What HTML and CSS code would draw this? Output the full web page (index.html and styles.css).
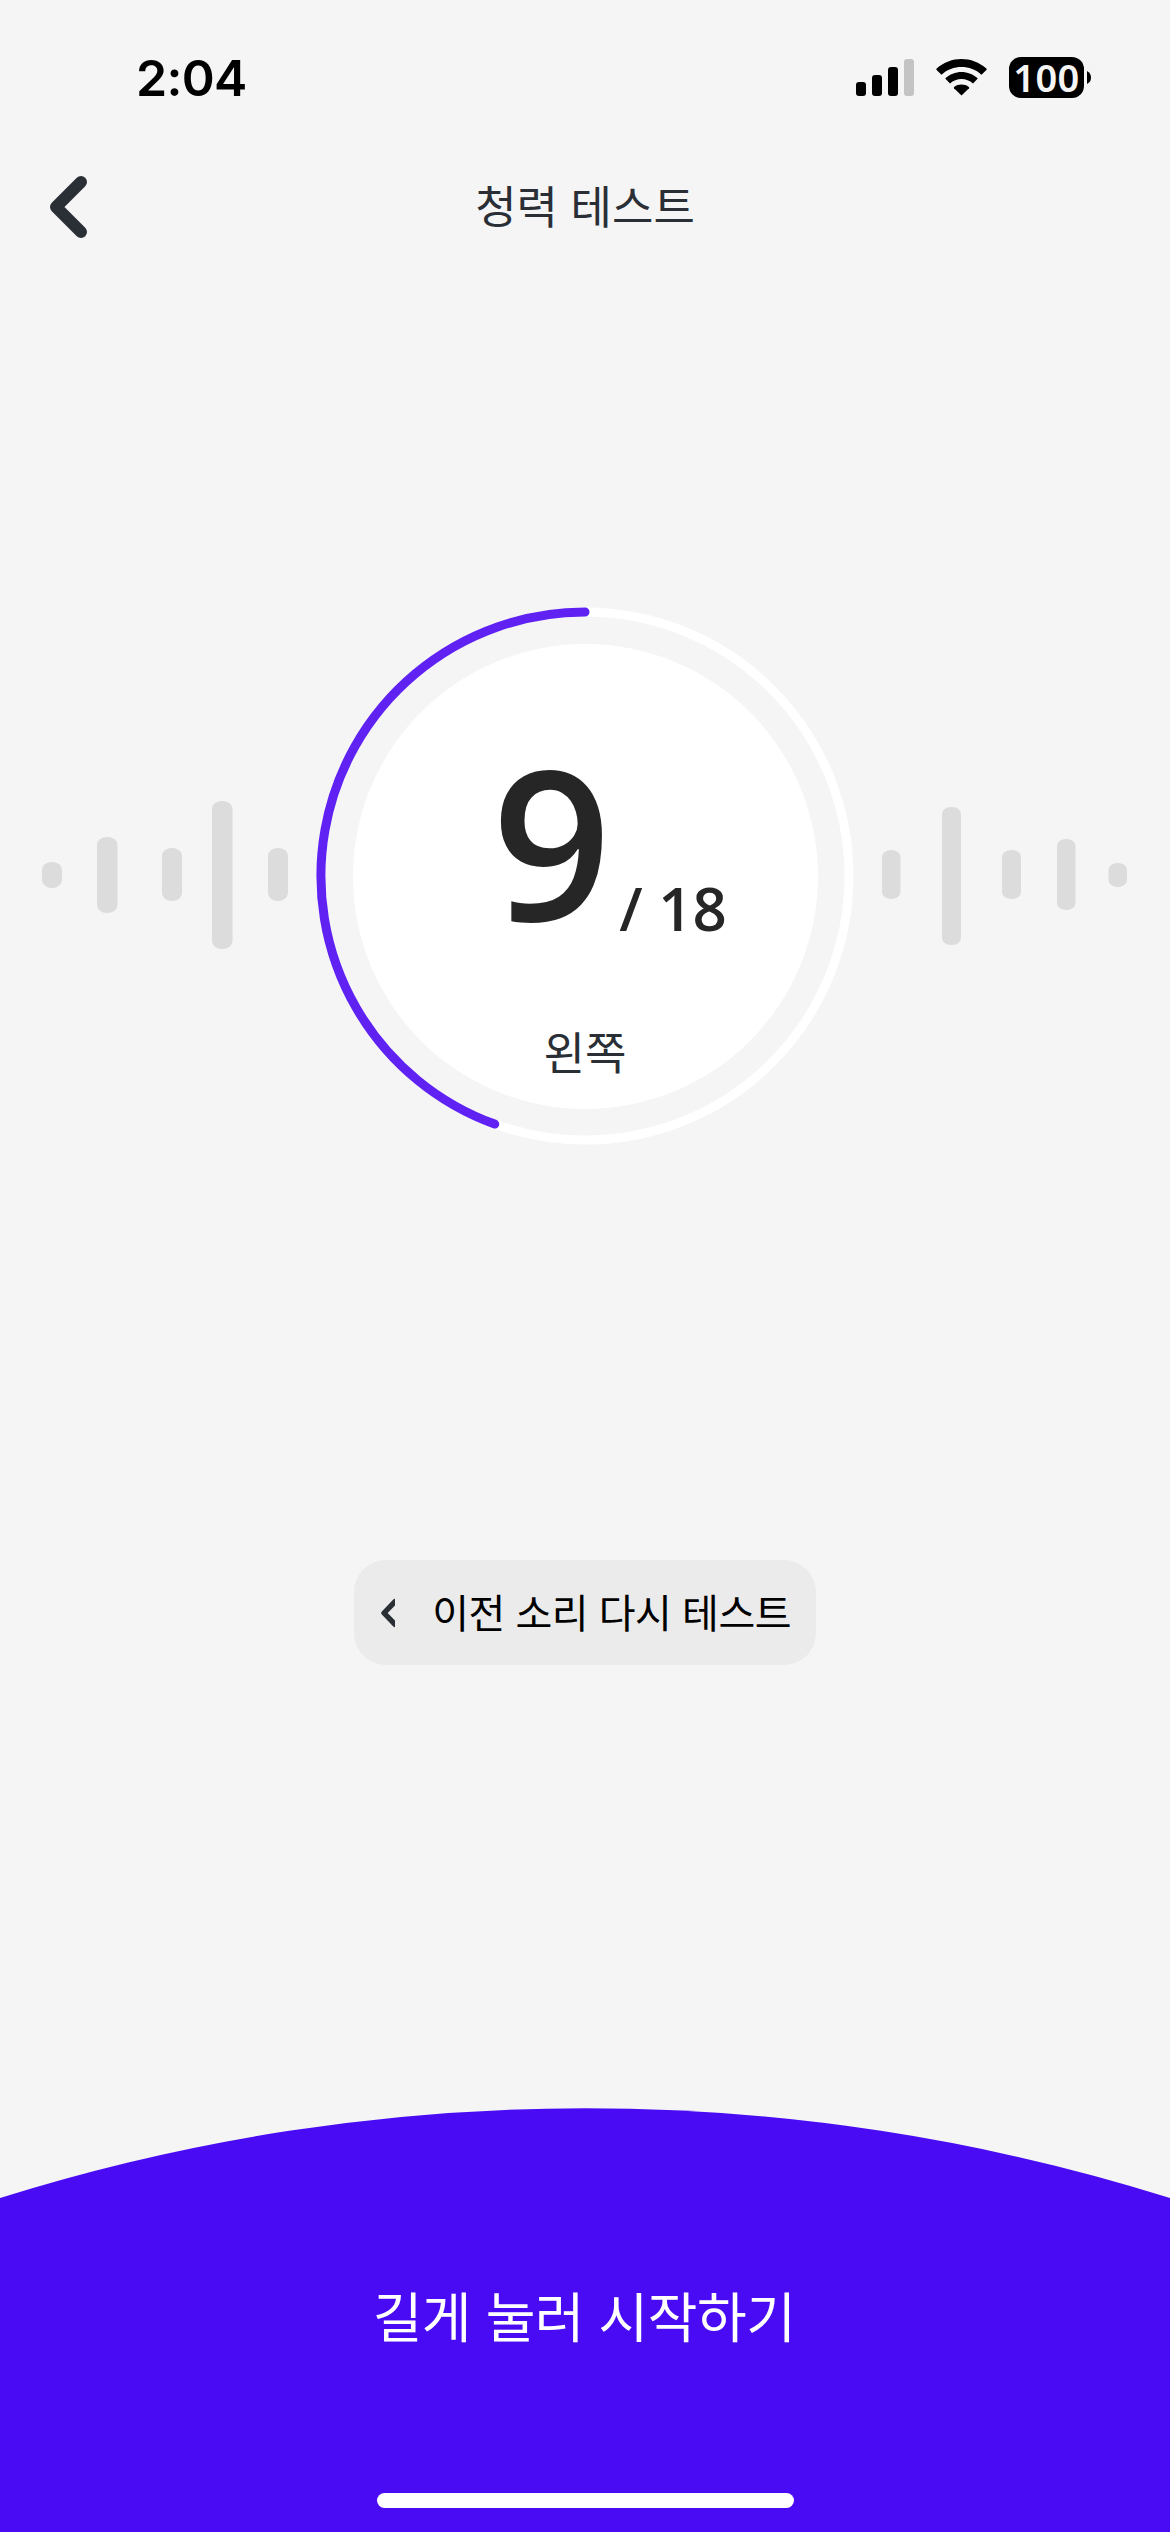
FILE: index.html
```html
<!DOCTYPE html>
<html lang="ko">
<head>
<meta charset="utf-8">
<title>청력 테스트</title>
<link rel="stylesheet" href="styles.css">
</head>
<body>
<div class="screen">
  <div class="status">
    <span class="time">2:04</span>
    <div class="indicators">
      <svg class="signal" width="58" height="37" viewBox="0 0 58 37">
        <rect x="0" y="23" width="10" height="14" rx="3"/>
        <rect x="16" y="16" width="10" height="21" rx="3"/>
        <rect x="32" y="8" width="10" height="29" rx="3"/>
        <rect x="48" y="0" width="10" height="37" rx="3" fill="#c4c4c4"/>
      </svg>
      <svg class="wifi" width="51" height="37" viewBox="0 0 51 37">
        <path d="M5.5 15.7 L0.6 10.9 Q0 10.2 .7 9.6 C14.5 -3.2 36.5 -3.2 50.3 9.6 Q51 10.2 50.4 10.9 L45.5 15.7 C34.5 5.4 16.5 5.4 5.5 15.7Z"/>
        <path d="M14 24.4 L9.2 19.6 C18.2 10.8 32.8 10.8 41.8 19.6 L37 24.4 C30.7 18.4 20.3 18.4 14 24.4Z"/>
        <path d="M25.5 36.6 L18 29.3 Q17.5 28.6 18.2 28 C22.4 24.8 28.6 24.8 32.8 28 Q33.5 28.6 33 29.3Z"/>
      </svg>
      <div class="battery"><span class="level">100</span></div>
      <svg class="nub" width="4" height="13" viewBox="0 0 4 13"><path d="M0 0Q4 2 4 6.5T0 13Z"/></svg>
    </div>
  </div>

  <header class="header">
    <svg class="back" width="38" height="62" viewBox="0 0 38 62"><path d="M31 6L6 31L31 56"/></svg>
    <h1 class="title">청력 테스트</h1>
  </header>

  <main class="test">
    <svg class="wave" width="246" height="148" viewBox="0 0 246 148">
      <rect x="0" y="61" width="20" height="26" rx="10" ry="8"/>
      <rect x="55" y="36" width="20.5" height="76" rx="10" ry="8"/>
      <rect x="120" y="47" width="20" height="53" rx="10" ry="8"/>
      <rect x="170" y="0" width="20.5" height="148" rx="10" ry="8"/>
      <rect x="226" y="47" width="20" height="53" rx="10" ry="8"/>
    </svg>
    <div class="dial">
      <svg class="ring" width="538" height="538" viewBox="0 0 538 538">
        <circle cx="269" cy="269" r="264" class="track"/>
        <path class="progress" d="M269 5A264 264 0 0 0 178.7 517.1"/>
      </svg>
      <div class="face">
        <div class="count"><span class="current">9</span><span class="total">/ 18</span></div>
        <div class="side">왼쪽</div>
      </div>
    </div>
    <svg class="wave" width="245" height="148" viewBox="0 0 245 148">
      <rect x="0" y="49" width="18.5" height="49" rx="9" ry="7"/>
      <rect x="60" y="6" width="19" height="138" rx="9" ry="7"/>
      <rect x="120" y="49" width="19" height="49" rx="9" ry="7"/>
      <rect x="175" y="38" width="18.5" height="71" rx="9" ry="7"/>
      <rect x="226.5" y="62" width="18.5" height="24" rx="9" ry="7"/>
    </svg>
  </main>

  <div class="retry">
    <svg width="15" height="32" viewBox="0 0 15 32"><path d="M15 4.5L4 16L15 27.5"/></svg>
    <span class="retry-label">이전 소리 다시 테스트</span>
  </div>

  <footer class="start">
    <svg class="arch" width="1170" height="90" viewBox="0 0 1170 90"><path d="M0 90A1952 1952 0 0 1 1170 90Z"/></svg>
    <div class="start-body">
      <span class="start-label">길게 눌러 시작하기</span>
      <div class="home"></div>
    </div>
  </footer>
</div>
</body>
</html>
```
FILE: styles.css
```css
* { box-sizing: border-box; }
body { margin: 0; background: #f5f5f5; }
svg { display: block; flex: none; }

.screen {
  width: 1170px;
  height: 2532px;
  display: flex;
  flex-direction: column;
  background: #f5f5f5;
  font-family: "Noto Sans CJK KR", sans-serif;
  color: #2a2f36;
  overflow: hidden;
}

.status {
  height: 155px;
  padding: 0 79px 0 136px;
  display: flex;
  justify-content: space-between;
}
.time {
  margin-top: 48px;
  font: 600 50px/60px Inter, sans-serif;
  letter-spacing: -0.7px;
  color: #000;
}
.indicators { display: flex; height: 155px; }
.signal { margin-top: 59px; }
.wifi { margin: 59px 22px 0; }
.battery {
  width: 75px;
  height: 41px;
  margin-top: 57px;
  border-radius: 12px;
  background: #000;
  display: flex;
  justify-content: center;
  align-items: center;
}
.level {
  font: 600 38px/41px "Noto Sans", sans-serif;
  letter-spacing: 0.5px;
  color: #f5f5f5;
}
.nub { margin: 71px 0 0 3px; }

.header {
  height: 104px;
  padding: 0 50px;
  display: grid;
  grid-template-columns: 38px 1fr 38px;
  align-items: center;
}
.back path {
  fill: none;
  stroke: #2a2f36;
  stroke-width: 12;
  stroke-linecap: round;
  stroke-linejoin: round;
}
.title {
  margin: 0 0 4px;
  font-size: 45px;
  line-height: 66px;
  font-weight: 400;
  text-align: center;
}

.test {
  margin-top: 348px;
  padding: 0 43px 0 42px;
  height: 538px;
  display: flex;
  justify-content: space-between;
  align-items: center;
}
.wave { fill: #dcdcdc; margin-bottom: 2px; }
.dial {
  display: grid;
  place-items: center;
}
.ring, .face { grid-area: 1 / 1; }
.ring { fill: none; stroke-width: 9; }
.track { stroke: #fff; }
.progress { stroke: #5f22f3; stroke-linecap: round; }
.face {
  width: 465px;
  height: 465px;
  border-radius: 50%;
  background: #fff;
  display: flex;
  flex-direction: column;
  align-items: center;
}
.count {
  height: 365px;
  padding: 92px 0 0 49px;
  display: flex;
  color: #262626;
  font-family: "Open Sans", sans-serif;
  font-weight: 600;
}
.current { font-size: 208px; line-height: 210px; }
.total { margin: 132px 0 0 8px; font-size: 60px; line-height: 80px; }
.side { font-size: 45px; line-height: 66px; margin-top: 9px; }

.retry {
  margin: 415px auto 0;
  width: 462px;
  height: 105px;
  padding: 0 25px 0 26px;
  border-radius: 32px;
  background: #ebebeb;
  display: flex;
  justify-content: space-between;
  align-items: center;
}
.retry path {
  fill: none;
  stroke: #2a2f36;
  stroke-width: 5.4;
  stroke-linecap: round;
  stroke-linejoin: round;
}
.retry-label {
  margin-bottom: 3px;
  font-size: 40px;
  line-height: 60px;
  letter-spacing: -0.5px;
  color: #000;
  white-space: nowrap;
}

.start { margin-top: auto; }
.arch { fill: #480bf4; }
.start-body {
  height: 334px;
  padding: 77px 0 24px;
  background: #480bf4;
  display: flex;
  flex-direction: column;
  align-items: center;
  justify-content: space-between;
}
.start-label { font-size: 54px; line-height: 80px; letter-spacing: -0.5px; padding-right: 2px; color: #fff; }
.home { width: 417px; height: 15px; border-radius: 8px; background: #fff; }
```
